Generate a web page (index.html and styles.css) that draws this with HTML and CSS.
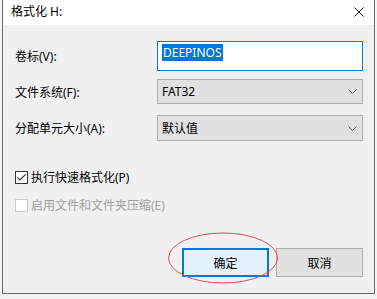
FILE: index.html
```html
<!DOCTYPE html>
<html lang="zh-CN">
<head>
<meta charset="utf-8">
<title>格式化 H:</title>
<link rel="stylesheet" href="styles.css">
</head>
<body>
<div class="dialog">
  <div class="titlebar">
    <span class="title">格式化 H:</span>
    <svg class="close" width="10" height="10" viewBox="0 0 10 10"><path d="M0.5 0.5 L9.5 9.5 M9.5 0.5 L0.5 9.5" stroke="#1a1a1a" stroke-width="1" fill="none"/></svg>
  </div>
  <div class="body">
    <div class="row row-input">
      <label class="lbl">卷标(V):</label>
      <div class="input"><span class="sel">DEEPINOS</span></div>
    </div>
    <div class="row row-s1">
      <label class="lbl">文件系统(F):</label>
      <div class="select"><span>FAT32</span>
        <svg class="chev" width="9" height="5" viewBox="0 0 9 5"><path d="M0.5 0.5 L4.5 4.5 L8.5 0.5" stroke="#606060" fill="none"/></svg>
      </div>
    </div>
    <div class="row row-s2">
      <label class="lbl">分配单元大小(A):</label>
      <div class="select"><span>默认值</span>
        <svg class="chev" width="9" height="5" viewBox="0 0 9 5"><path d="M0.5 0.5 L4.5 4.5 L8.5 0.5" stroke="#606060" fill="none"/></svg>
      </div>
    </div>
    <div class="check check1">
      <span class="box"><svg width="11" height="11" viewBox="0 0 11 11"><path d="M1.5 5.5 L4 8 L9.5 2.5" stroke="#333" stroke-width="1.1" fill="none"/></svg></span>
      <span>执行快速格式化(P)</span>
    </div>
    <div class="check check2 disabled">
      <span class="box"></span>
      <span>启用文件和文件夹压缩(E)</span>
    </div>
    <div class="buttons">
      <button class="btn primary">确定</button>
      <button class="btn">取消</button>
    </div>
  </div>
  <svg class="ring" width="112" height="54" viewBox="0 0 112 54"><ellipse cx="56" cy="27" rx="54.5" ry="25" stroke="#e8504f" stroke-width="1" fill="none"/></svg>
</div>
</body>
</html>
```
FILE: styles.css
```css
html, body {
  margin: 0;
  padding: 0;
}
body {
  width: 377px;
  height: 299px;
  background: #f4f4f4;
  font-family: "Noto Sans", "Noto Sans CJK SC", sans-serif;
  font-size: 12px;
  color: #000;
  overflow: hidden;
}
.dialog {
  position: relative;
  margin-left: 2px;
  width: 373px;
  height: 294px;
  box-sizing: border-box;
  border: 1px solid #6a6a6a;
  border-top: none;
  background: #f0f0f0;
  display: flex;
  flex-direction: column;
}
.titlebar {
  height: 25px;
  background: #fff;
  display: flex;
  align-items: center;
  justify-content: space-between;
  padding: 0 10px 0 8px;
  flex: none;
}
.title {
  font-size: 12px;
  line-height: 16px;
  margin-top: -1px;
}
.close {
  display: block;
  margin-top: -2px;
}
.body {
  flex: 1;
  display: flex;
  flex-direction: column;
  padding: 16px 11px 16px 12px;
}
.row {
  display: flex;
  align-items: center;
}
.lbl {
  width: 142px;
  flex: none;
}
.row-input { height: 30px; }
.row-s1 { margin-top: 8px; height: 25px; }
.row-s2 { margin-top: 11px; height: 26px; }
.input {
  width: 206px;
  height: 30px;
  box-sizing: border-box;
  border: 1px solid #0078d7;
  background: #fff;
  padding: 2px 0 0 4px;
}
.sel {
  display: inline-block;
  background: #0078d7;
  color: #fff;
  line-height: 17px;
  padding: 0 1px;
}
.select {
  width: 206px;
  height: 100%;
  box-sizing: border-box;
  border: 1px solid #adadad;
  background: #e1e1e1;
  display: flex;
  align-items: center;
  justify-content: space-between;
  padding: 0 5px 0 4px;
}
.chev { display: block; }
.check {
  display: flex;
  align-items: center;
  height: 20px;
}
.check1 { margin-top: 26px; }
.check2 { margin-top: 8px; }
.box {
  width: 13px;
  height: 13px;
  box-sizing: border-box;
  border: 1px solid #333;
  background: #fff;
  margin-right: 3px;
  display: flex;
  align-items: center;
  justify-content: center;
}
.disabled { color: #a0a0a0; }
.disabled .box { border-color: #cccccc; }
.buttons {
  margin-top: auto;
  display: flex;
  justify-content: flex-end;
  gap: 7px;
}
.btn {
  width: 87px;
  height: 29px;
  box-sizing: border-box;
  border: 1px solid #adadad;
  background: #e1e1e1;
  font-family: "Noto Sans", "Noto Sans CJK SC", sans-serif;
  font-size: 12px;
  color: #000;
  padding: 0;
}
.btn.primary {
  border: 2px solid #0078d7;
  background: #e5f1fb;
}
.ring {
  position: absolute;
  left: 164px;
  top: 231px;
}
```
